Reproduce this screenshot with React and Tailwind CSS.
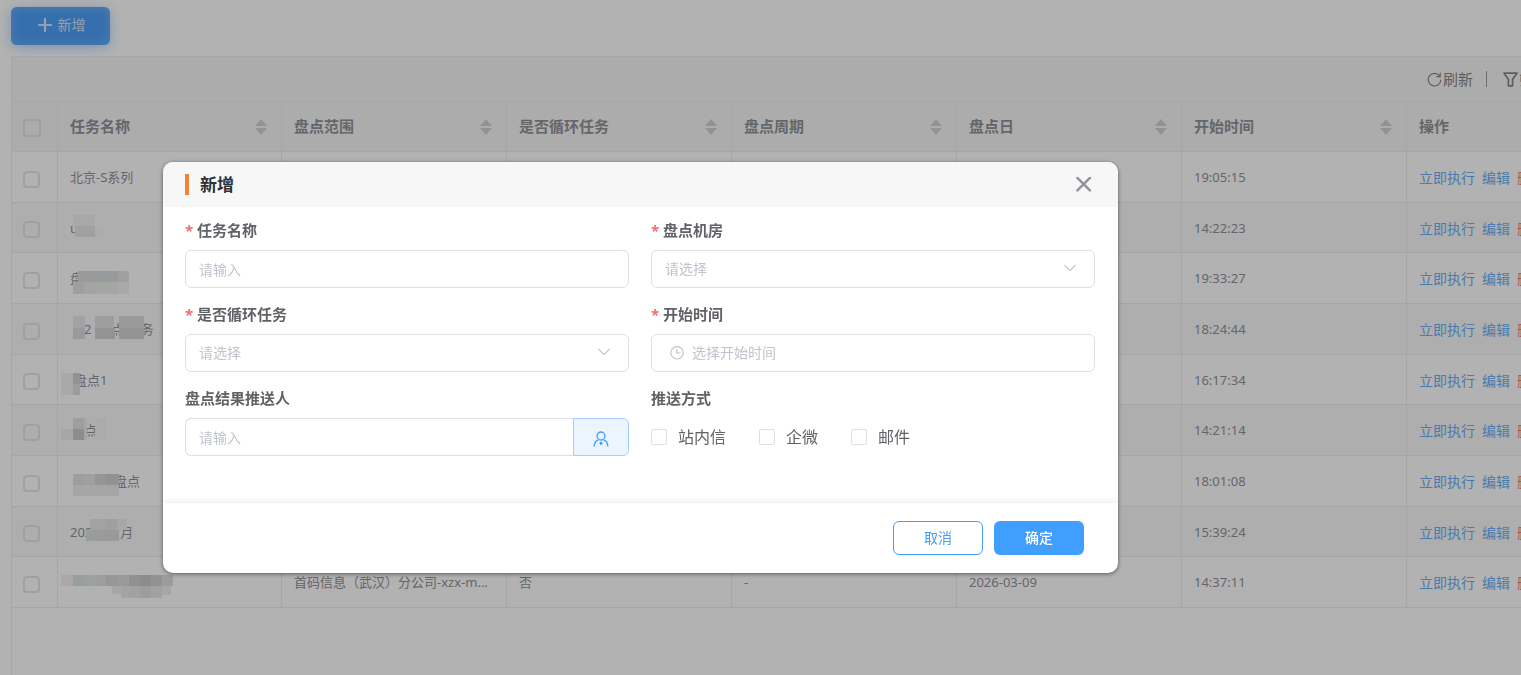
import React from "react";

const COLUMNS = ["任务名称", "盘点范围", "是否循环任务", "盘点周期", "盘点日", "开始时间"];

// Mosaic blocks are [x, y, width, height, colour], measured from the cell's top left corner.
const ROWS = [
  { name: "北京-S系列", time: "19:05:15" },
  {
    name: "u",
    time: "14:22:23",
    blocks: [[15, 12, 22, 11, "#f1f1f0"], [17, 23, 20, 11, "#e4e6e8"], [37, 23, 8, 11, "#f6f6f6"]],
  },
  {
    name: "盘",
    time: "19:33:27",
    blocks: [
      [20, 18, 7, 11, "#dddddd"], [27, 18, 10, 11, "#dddddd"], [37, 18, 12, 11, "#d8dde1"],
      [49, 18, 11, 11, "#dddddd"], [60, 18, 11, 11, "#e6e6e6"], [15, 29, 11, 12, "#e2e4e4"],
      [26, 29, 11, 12, "#ebebe9"], [37, 29, 23, 12, "#ededeb"], [60, 29, 11, 12, "#f2f2f2"],
    ],
  },
  {
    name: (
      <>
        <span className="ml-3.5">2</span>
        <span className="ml-5">点</span>
        <span className="ml-4">务</span>
      </>
    ),
    time: "18:24:44",
    blocks: [
      [15, 12, 12, 12, "#e8e8ea"], [15, 24, 12, 11, "#dcdde1"], [37, 12, 19, 12, "#e3e2e2"],
      [37, 24, 20, 11, "#d6d3d1"], [61, 12, 25, 12, "#dcdcdd"], [61, 24, 25, 11, "#d4d5d8"],
    ],
  },
  {
    name: <span className="ml-1">盘点1</span>,
    time: "16:17:34",
    blocks: [[3, 18, 12, 22, "#f3f2f1"], [15, 18, 7, 11, "#d2d2d2"], [15, 29, 7, 11, "#e0e0e0"]],
  },
  {
    name: <span className="ml-3.5">点</span>,
    time: "14:21:14",
    blocks: [
      [3, 24, 12, 11, "#efefed"], [15, 13, 11, 11, "#e2e2e2"], [15, 24, 11, 11, "#cacaca"],
      [26, 13, 3, 22, "#ececec"], [37, 13, 11, 22, "#f5f5f5"],
    ],
  },
  {
    name: <span className="ml-11">盘点</span>,
    time: "18:01:08",
    blocks: [
      [15, 18, 11, 11, "#e1e2e8"], [26, 18, 11, 11, "#e4e5e8"], [37, 18, 11, 11, "#d6d6d6"],
      [48, 18, 13, 11, "#d0d0d0"], [15, 29, 22, 11, "#eeeeee"], [37, 29, 24, 11, "#ececec"],
    ],
  },
  {
    name: (
      <>
        <span>202</span>
        <span className="ml-7">月</span>
      </>
    ),
    time: "15:39:24",
    blocks: [
      [32, 12, 16, 11, "#e9e9e9"], [48, 12, 11, 11, "#e4e4e4"], [59, 12, 10, 11, "#eff0f1"],
      [28, 23, 9, 11, "#dfe0e2"], [37, 23, 11, 11, "#dddddf"], [48, 23, 13, 11, "#dddddd"],
    ],
  },
  {
    name: "",
    scope: "首码信息（武汉）分公司-xzx-m...",
    loop: "否",
    period: "-",
    day: "2026-03-09",
    time: "14:37:11",
    blocks: [
      [3, 18, 12, 11, "#f3f1ef"], [15, 18, 11, 11, "#dce2e7"], [26, 18, 11, 11, "#e2e5e9"],
      [37, 18, 11, 11, "#e3e3e3"], [48, 18, 12, 11, "#d9d9d9"], [60, 18, 11, 11, "#d8dee3"],
      [71, 18, 11, 11, "#cfd0d2"], [82, 18, 11, 11, "#cacaca"], [93, 18, 11, 11, "#d2d2d3"],
      [104, 18, 11, 11, "#dee0e2"], [54, 29, 17, 8, "#f0f0f0"], [63, 29, 8, 12, "#eaeaea"],
      [71, 29, 11, 12, "#e9e9e7"], [82, 29, 11, 12, "#e1e1e1"], [93, 29, 11, 12, "#e8e8e8"],
      [104, 29, 9, 9, "#efefef"],
    ],
  },
];

function Mosaic({ blocks }) {
  return (
    <svg className="absolute left-0 top-0 h-12 w-32" viewBox="0 0 128 48" aria-hidden="true">
      {blocks.map(([x, y, w, h, fill]) => (
        <rect key={`${x}-${y}`} x={x} y={y} width={w} height={h} fill={fill} shapeRendering="crispEdges" />
      ))}
    </svg>
  );
}

function SortIcon() {
  return (
    <svg className="h-4 w-3" viewBox="0 0 12 16" fill="#d0d2d9" aria-hidden="true">
      <path d="M6 0L12 7H0z" />
      <path d="M0 9H12L6 16z" />
    </svg>
  );
}

function Chevron() {
  return (
    <svg className="pointer-events-none absolute right-[19px] top-3.5 h-2 w-3" viewBox="0 0 12 8" fill="none" stroke="#c0c4cc" strokeWidth="1.3" strokeLinecap="round" strokeLinejoin="round" aria-hidden="true">
      <path d="M0.8 1.4L6 6.6L11.2 1.4" />
    </svg>
  );
}

function Field({ id, label, required, children }) {
  return (
    <div className="flex flex-col gap-2">
      <label htmlFor={id} className="flex h-6 items-center gap-1 text-[15px] font-bold text-[#606266]">
        {required && <span className="w-2 text-[#f56c6c]">*</span>}
        <span>{label}</span>
      </label>
      {children}
    </div>
  );
}

const control =
  "h-[38px] w-full rounded-md border border-[#dcdfe6] bg-white px-[13px] text-sm text-[#606266] outline-none placeholder:text-[#c0c4cc]";

function Select({ id }) {
  return (
    <div className="relative">
      <select id={id} defaultValue="" className={`${control} appearance-none text-[#c0c4cc]`}>
        <option value="">请选择</option>
      </select>
      <Chevron />
    </div>
  );
}

function TaskTable() {
  return (
    <table className="w-max table-fixed border-separate border-spacing-0 text-left text-[13px] text-[#909399]">
      <colgroup>
        <col className="w-[46px]" />
        <col className="w-[224px]" />
        <col className="w-[225px]" />
        <col className="w-[225px]" />
        <col className="w-[225px]" />
        <col className="w-[225px]" />
        <col className="w-[225px]" />
        <col className="w-[225px]" />
      </colgroup>
      <thead>
        <tr className="h-[50px] bg-[#f7f7f7] text-[15px]">
          <th className="w-[46px] border-b border-r border-[#ebeef2] p-0">
            <input type="checkbox" aria-label="全选" className="mt-0.5 ml-[11px] block size-[18px] appearance-none rounded border-2 border-[#e4e5ec]" />
          </th>
          {COLUMNS.map((title) => (
            <th key={title} className="border-b border-r border-[#ebeef2] px-3 py-0 font-bold">
              <div className="flex items-center justify-between pr-0.5">
                {title}
                <SortIcon />
              </div>
            </th>
          ))}
          <th className="border-b border-r border-[#ebeef2] px-3 py-0 font-bold">操作</th>
        </tr>
      </thead>
      <tbody>
        {ROWS.map((row) => (
          <tr key={row.time} className="h-[51px] even:bg-[#fafafa] nth-[3n+2]:h-[50px] [&>td]:border-b [&>td]:border-r [&>td]:border-[#ebeef2] [&>td]:px-3 [&>td]:pb-0 [&>td]:pt-0.5">
            <td className="!p-0">
              <input type="checkbox" aria-label="选择任务" className="mt-1 ml-[11px] block size-[17px] appearance-none rounded border-2 border-[#e4e5ec]" />
            </td>
            <td className="relative">
              <div className="flex">{row.name}</div>
              {row.blocks && <Mosaic blocks={row.blocks} />}
            </td>
            <td className="whitespace-nowrap">{row.scope}</td>
            <td>{row.loop}</td>
            <td>{row.period}</td>
            <td>{row.day}</td>
            <td>{row.time}</td>
            <td>
              <div className="flex gap-[7px] text-sm text-[#6eb0f8]">
                <a href="#run">立即执行</a>
                <a href="#edit">编辑</a>
                <a href="#delete" className="text-[#f08080]">删除</a>
              </div>
            </td>
          </tr>
        ))}
      </tbody>
    </table>
  );
}

function Dialog() {
  return (
    <section role="dialog" aria-modal="true" aria-labelledby="dialog-title" className="w-full max-w-[955px] overflow-hidden rounded-[10px] bg-white shadow-[0_1px_4px_rgba(0,0,0,0.5)]">
      <header className="flex h-[45px] items-center justify-between bg-[#f7f7f7] pl-[22px] pr-[26px]">
        <div className="flex items-center gap-[11px]">
          <span className="h-[21px] w-1 bg-[#f5822f]" />
          <h2 id="dialog-title" className="text-[17px] font-bold text-[#303133]">新增</h2>
        </div>
        <button type="button" aria-label="关闭" className="flex size-4">
          <svg className="size-4" viewBox="0 0 16 16" fill="none" stroke="#909399" strokeWidth="2.4" strokeLinecap="round" aria-hidden="true">
            <path d="M1.4 0.9L13.9 13.4M13.9 0.9L1.4 13.4" />
          </svg>
        </button>
      </header>

      <div className="grid grid-cols-2 gap-x-[22px] gap-y-3.5 pl-[22px] pr-[23px] pb-[47px] pt-[11px]">
        <Field id="task-name" label="任务名称" required>
          <input id="task-name" type="text" placeholder="请输入" className={control} />
        </Field>
        <Field id="room" label="盘点机房" required>
          <Select id="room" />
        </Field>
        <Field id="loop" label="是否循环任务" required>
          <Select id="loop" />
        </Field>
        <Field id="start" label="开始时间" required>
          <div className="flex h-[38px] items-center gap-2 rounded-md border border-[#dcdfe6] px-[18px]">
            <svg className="size-3.5 shrink-0" viewBox="0 0 14 14" fill="none" stroke="#c0c4cc" strokeWidth="1.2" strokeLinecap="round" aria-hidden="true">
              <circle cx="7" cy="6.8" r="6.2" />
              <path d="M6.8 3.4V7H10" />
            </svg>
            <input id="start" type="text" placeholder="选择开始时间" className="min-w-0 flex-1 text-sm outline-none placeholder:text-[#c0c4cc]" />
          </div>
        </Field>
        <Field id="receiver" label="盘点结果推送人">
          <div className="flex">
            <input id="receiver" type="text" placeholder="请输入" className="h-[38px] min-w-0 flex-1 rounded-l-md border border-r-0 border-[#dcdfe6] px-[13px] text-sm outline-none placeholder:text-[#c0c4cc]" />
            <button type="button" aria-label="选择人员" className="flex h-[38px] w-14 items-center justify-center rounded-r-md border border-[#a0cfff] bg-[#ecf5ff] pt-1">
              <svg className="size-4" viewBox="0 0 16 16" fill="none" stroke="#409eff" strokeWidth="1.3" strokeLinecap="round" aria-hidden="true">
                <circle cx="8" cy="5" r="4" />
                <path d="M1.2 15C1.4 12 3 10 5 9.2M14.8 15C14.6 12 13 10 11 9.2" />
                <path d="M8 10.4L9.9 12.1L8 14.4L6.1 12.1z" fill="#409eff" stroke="none" />
              </svg>
            </button>
          </div>
        </Field>
        <fieldset className="flex flex-col gap-2">
          <legend className="float-left flex h-6 items-center text-[15px] font-bold text-[#606266]">推送方式</legend>
          <div className="flex h-[38px] items-center gap-[33px] text-base text-[#606266]">
            {["站内信", "企微", "邮件"].map((name) => (
              <label key={name} className="flex items-center gap-[11px]">
                <input type="checkbox" className="size-4 appearance-none rounded-xs border border-[#dcdfe6] bg-white" />
                {name}
              </label>
            ))}
          </div>
        </fieldset>
      </div>

      <footer className="flex h-[70px] items-center justify-end gap-[11px] pr-[34px] shadow-[0_0_8px_rgba(0,0,0,0.1)]">
        <button type="button" className="h-[34px] w-[90px] rounded-md border border-[#409eff] text-sm text-[#409eff]">取消</button>
        <button type="button" className="h-[34px] w-[90px] rounded-md bg-[#409eff] text-sm font-medium text-white">确定</button>
      </footer>
    </section>
  );
}

export default function App() {
  return (
    <div className="h-screen overflow-hidden bg-white font-['Noto_Sans','Noto_Sans_CJK_SC',sans-serif]">
      <main className="flex h-full flex-col items-start gap-[11px] pl-[11px] pt-[7px]">
        <button type="button" className="flex h-[38px] w-[99px] shrink-0 items-center justify-center gap-1.5 rounded-md bg-[#4ea0fa] pb-0.5 pl-0.5 text-sm text-white/75 shadow-[0_2px_12px_rgba(64,158,255,0.45),inset_0_0_10px_#74b2f5]">
          <svg className="size-3.5" viewBox="0 0 14 14" stroke="currentColor" strokeWidth="2.2" strokeLinecap="round" aria-hidden="true">
            <path d="M7 1V13M1 7H13" />
          </svg>
          新增
        </button>

        <div className="w-max flex-1 border-l border-t border-[#ebeef2]">
          <div className="flex h-[45px] items-center justify-end border-b border-[#ebeef2] bg-[#f7f7f7] pr-[83px] text-[15px] text-[#85878c]">
            <button type="button" className="flex items-center">
              <svg className="mr-px size-[15px]" viewBox="0 0 15 15" fill="none" stroke="currentColor" strokeWidth="1.2" strokeLinecap="round" aria-hidden="true">
                <path d="M12.8 4.2A6.3 6.3 0 1 0 13.8 8.2" />
                <path d="M13.2 1.2V4.6H9.8" />
              </svg>
              刷新
            </button>
            <span className="mx-[13px] h-4 w-px bg-[#9a9ca0]" />
            <button type="button" className="ml-[3px] flex items-center gap-px">
              <svg className="size-[15px]" viewBox="0 0 15 15" fill="none" stroke="currentColor" strokeWidth="1.7" strokeLinejoin="round" aria-hidden="true">
                <path d="M1 1.2H14L9.6 7.2V13.8H5.4V7.2z" />
              </svg>
              筛选
            </button>
          </div>
          <TaskTable />
        </div>
      </main>

      <div className="fixed inset-0 overflow-hidden bg-black/30 pl-[163px] pt-[162px]">
        <Dialog />
      </div>
    </div>
  );
}
